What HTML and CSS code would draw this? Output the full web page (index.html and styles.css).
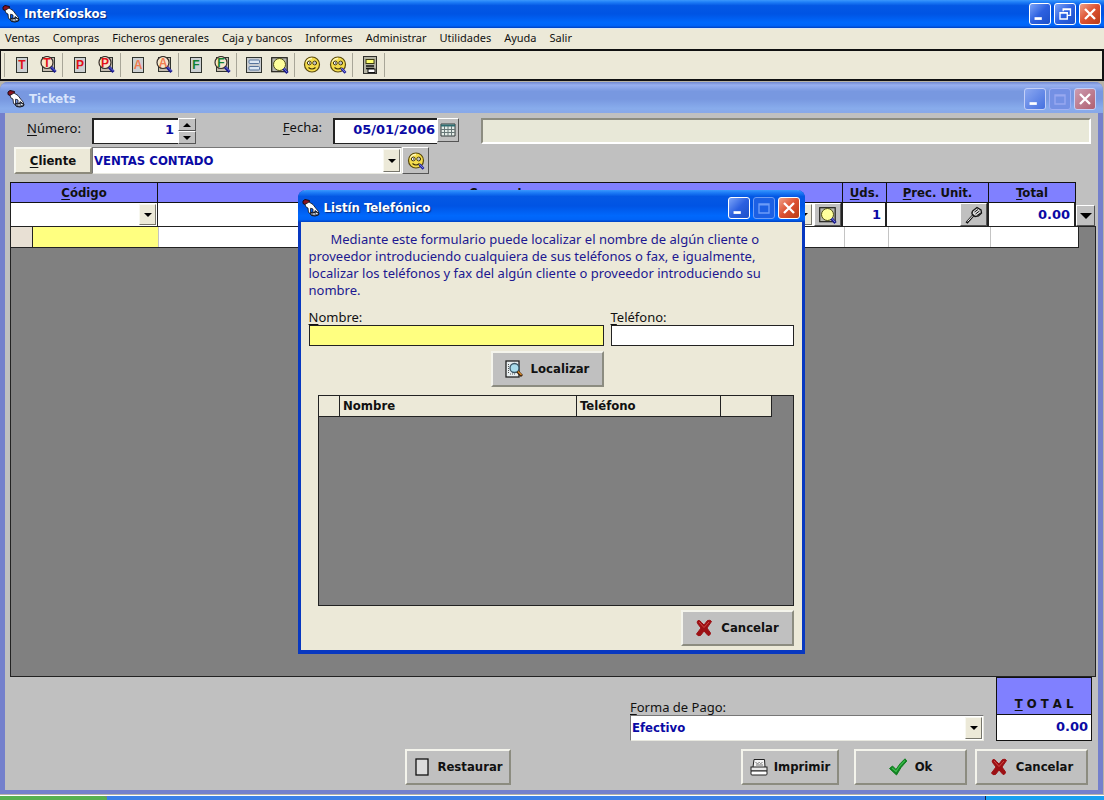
FILE: index.html
```html
<!DOCTYPE html>
<html lang="es">
<head>
<meta charset="utf-8">
<title>InterKioskos</title>
<meta name="viewport" content="width=device-width, initial-scale=1">
<link rel="stylesheet" href="styles.css">
</head>
<body>
<svg class="defs" aria-hidden="true">
  <symbol id="hand" viewBox="0 0 18 18">
    <path d="M1 2L3 .5L7.500 1.500L7 4L3 5.500L1 4.500z" fill="#8c1420" stroke="#1a0a18"/>
    <path d="M3 5.500L7 3L11 5.500L14 9.500L16.500 12.500L16 14L13 11.500L12.500 14L11 13L11 10L8.500 9L8.500 14.500L6.500 13.500L6 9L4 8z" fill="#fff" stroke="#101018" stroke-width=".8"/>
    <path d="M4 6.500L7 4.500L10.500 6.500L12.500 9.500L8.500 8L7.500 12.500L6.800 8z" fill="#fff"/>
    <path d="M8 14.500L10 13L12 14L14 12.500L17 14L16.500 16L13 17L9.500 16.500z" fill="#667080" stroke="#101018"/>
    <path d="M11 15h2M14 14.500h1.500" stroke="#e8eef4"/>
  </symbol>
  <symbol id="page" viewBox="0 0 18 18">
    <rect x="3.500" y="1.500" width="11" height="15" fill="#ccd0d2" stroke="#30342e"/>
  </symbol>
  <symbol id="lens" viewBox="0 0 18 18">
    <rect x="3.500" y="1.500" width="12" height="14" fill="#c4bcb0" stroke="#30342e"/>
    <circle cx="8" cy="6.500" r="6" fill="#f6e6cc" stroke="#38302c" stroke-width="1.200"/>
    <path d="M12 11L16.500 16" stroke="#1a1a8c" stroke-width="3"/>
    <path d="M12.500 11L16.500 15" stroke="#6c74e0" stroke-width="1"/>
  </symbol>
  <symbol id="face" viewBox="0 0 18 18">
    <circle cx="9" cy="8.500" r="7.500" fill="#f4dc4c" stroke="#5a4a0c" stroke-width="1.200"/>
    <path d="M3.500 6A6 6 0 0 1 9 2.500" stroke="#fff8b8" stroke-width="1.500" fill="none"/>
    <circle cx="6.300" cy="7" r="1.900" fill="#fff" stroke="#3a3008"/><circle cx="11.700" cy="7" r="1.900" fill="#fff" stroke="#3a3008"/>
    <path d="M6 7h1M11.500 7h1" stroke="#000"/>
    <path d="M5.500 11.500Q9 14.500 12.500 11.500" fill="none" stroke="#3a3008" stroke-width="1.200"/>
  </symbol>
  <symbol id="facelens" viewBox="0 0 18 18">
    <use href="#face"/>
    <path d="M12.500 12.500L16.500 16.800" stroke="#24249c" stroke-width="2.600"/>
    <path d="M12.500 12.300L16 16" stroke="#7a84e8"/>
  </symbol>
  <symbol id="find" viewBox="0 0 18 18">
    <rect x=".7" y="1.700" width="15.500" height="14" fill="#b8b8b0" stroke="#20201c" stroke-width="1.200"/>
    <circle cx="8.500" cy="8.500" r="6" fill="#ffff9c" stroke="#4c4c14"/>
    <path d="M12.500 12.500L16.500 17" stroke="#1c1c8c" stroke-width="3"/>
    <path d="M12.500 12L16 16" stroke="#7a84e8"/>
  </symbol>
  <symbol id="cross" viewBox="0 0 18 18">
    <path d="M3 1.500Q5 1 6.500 3.500L9 6L12.500 1.500Q15.500 .5 16.500 2.500L12 9L15.500 14Q15.500 16.500 13 16.500L9 12L5.500 16.500Q2.500 17.500 1.500 15L6 9L2.500 4.500Q1.500 3 3 1.500z" fill="#9c1014" stroke="#9c1014"/>
    <path d="M4 3L9 8.500L14 3" stroke="#d04844" fill="none"/>
  </symbol>
  <symbol id="min" viewBox="0 0 22 22"><path d="M5 16h8" stroke="#fff" stroke-width="3"/></symbol>
  <symbol id="max" viewBox="0 0 22 22"><path d="M5.500 6.500h11v10h-11zM5.500 7.500h11" fill="none" stroke="currentColor" stroke-width="1.500"/></symbol>
  <symbol id="close" viewBox="0 0 22 22"><path d="M5.500 5.500l11 11M16.500 5.500L5.500 16.500" stroke="#fff" stroke-width="2.600"/></symbol>
  <symbol id="down" viewBox="0 0 8 4"><path d="M0 0h8L4 4z"/></symbol>
</svg>

<header class="titlebar">
  <svg class="ico"><use href="#hand"/></svg>
  <h1>InterKioskos</h1>
  <div class="wbtns">
    <button class="wbtn" aria-label="Minimizar"><svg><use href="#min"/></svg></button>
    <button class="wbtn" aria-label="Restaurar ventana"><svg viewBox="0 0 22 22"><path d="M9 8V5.500h8v7h-3M5.500 9.500h8v7h-8zM9 6h8M5.500 10h8" fill="none" stroke="#fff" stroke-width="1.500"/></svg></button>
    <button class="wbtn red" aria-label="Cerrar"><svg><use href="#close"/></svg></button>
  </div>
</header>
<nav class="menu">
  <a href="#">Ventas</a><a href="#">Compras</a><a href="#">Ficheros generales</a><a href="#">Caja y bancos</a><a href="#">Informes</a><a href="#">Administrar</a><a href="#">Utilidades</a><a href="#">Ayuda</a><a href="#">Salir</a>
</nav>
<div class="toolbar" role="toolbar" aria-label="Herramientas">
  <div class="tools">
    <button aria-label="Ticket"><svg viewBox="0 0 18 18"><use href="#page"/><text x="9" y="13" class="ltr red-l">T</text></svg></button>
    <button aria-label="Buscar ticket"><svg viewBox="0 0 18 18"><use href="#lens"/><text x="8" y="11" class="ltr red-l">T</text></svg></button>
  </div>
  <div class="tools">
    <button aria-label="Pedido"><svg viewBox="0 0 18 18"><use href="#page"/><text x="9" y="13" class="ltr red-l">P</text></svg></button>
    <button aria-label="Buscar pedido"><svg viewBox="0 0 18 18"><use href="#lens"/><text x="8" y="11" class="ltr red-l">P</text></svg></button>
  </div>
  <div class="tools">
    <button aria-label="Albarán"><svg viewBox="0 0 18 18"><use href="#page"/><text x="9" y="13" class="ltr org-l">A</text></svg></button>
    <button aria-label="Buscar albarán"><svg viewBox="0 0 18 18"><use href="#lens"/><text x="8" y="11" class="ltr org-l">A</text></svg></button>
  </div>
  <div class="tools">
    <button aria-label="Factura"><svg viewBox="0 0 18 18"><use href="#page"/><text x="9" y="13" class="ltr grn-l">F</text></svg></button>
    <button aria-label="Buscar factura"><svg viewBox="0 0 18 18"><use href="#lens"/><text x="8" y="11" class="ltr grn-l">F</text></svg></button>
  </div>
  <div class="tools">
    <button aria-label="Artículos"><svg viewBox="0 0 18 18"><rect x="1.500" y="1.500" width="15" height="15" fill="#c8ccd0" stroke="#30342e"/><rect x="4" y="4" width="10.500" height="3.500" rx="1" fill="#dce8f4" stroke="#56749c"/><rect x="4" y="10.500" width="10.500" height="3.500" rx="1" fill="#dce8f4" stroke="#56749c"/></svg></button>
    <button aria-label="Buscar artículo"><svg><use href="#find"/></svg></button>
  </div>
  <div class="tools">
    <button aria-label="Clientes"><svg><use href="#face"/></svg></button>
    <button aria-label="Buscar cliente"><svg><use href="#facelens"/></svg></button>
  </div>
  <div class="tools">
    <button aria-label="Caja"><svg viewBox="0 0 18 18"><rect x="2.500" y=".5" width="13" height="17" fill="#b4b4a4" stroke="#30302c"/><rect x="5" y="3.500" width="8" height="4" fill="#ffff70" stroke="#3c3c10"/><path d="M5 10h8M5 12.500h8" stroke="#111" stroke-width="1.500"/><rect x="7" y="13" width="7" height="3.500" fill="#fff" stroke="#111"/></svg></button>
  </div>
  <div class="tools"></div>
</div>

<main class="desk">
  <section class="window tickets" aria-label="Tickets">
    <header class="titlebar faded">
      <svg class="ico"><use href="#hand"/></svg>
      <h2>Tickets</h2>
      <div class="wbtns">
        <button class="wbtn" aria-label="Minimizar Tickets"><svg><use href="#min"/></svg></button>
        <button class="wbtn off" aria-label="Maximizar Tickets" disabled><svg><use href="#max"/></svg></button>
        <button class="wbtn red" aria-label="Cerrar Tickets"><svg><use href="#close"/></svg></button>
      </div>
    </header>
    <form class="form">
      <div class="row">
        <label class="lab-num" for="num"><u>N</u>úmero:</label>
        <div class="spin">
          <input id="num" class="box num" value="1">
          <div class="spinner">
            <button type="button" aria-label="Subir"><svg class="tri flip"><use href="#down"/></svg></button>
            <button type="button" aria-label="Bajar"><svg class="tri"><use href="#down"/></svg></button>
          </div>
        </div>
        <label class="lab-date" for="fecha"><u>F</u>echa:</label>
        <div class="date">
          <input id="fecha" class="box num" value="05/01/2006">
          <button type="button" class="raised" aria-label="Calendario"><svg class="cal" viewBox="0 0 16 14"><path d="M1 1h14v12H1z" fill="#e4ece8" stroke="#343c3c"/><path d="M1 2.500h14" stroke="#2c6c70" stroke-width="2"/><path d="M1 6.500h14M1 9.500h14M4.500 3v10M8 3v10M11.500 3v10" stroke="#687878"/></svg></button>
        </div>
        <output class="panel"></output>
      </div>
      <div class="row second">
        <button type="button" class="cream"><span><u>C</u>liente</span></button>
        <div class="combo client"><select aria-label="Cliente"><option>VENTAS CONTADO</option></select><span class="arrow"><svg class="tri"><use href="#down"/></svg></span></div>
        <button type="button" class="raised sq" aria-label="Buscar cliente"><svg class="ico"><use href="#facelens"/></svg></button>
      </div>

      <div class="entry">
        <label class="hd" for="cod"><span><u>C</u>ódigo</span></label>
        <label class="hd" for="con"><span><u>C</u>oncepto</span></label>
        <label class="hd" for="uds"><span><u>U</u>ds.</span></label>
        <label class="hd" for="pre"><span><u>P</u>rec. Unit.</span></label>
        <label class="hd" for="tot"><span><u>T</u>otal</span></label>
        <i></i>
        <div class="combo cell"><select id="cod"><option></option></select><span class="arrow"><svg class="tri"><use href="#down"/></svg></span></div>
        <div class="cell split"><div class="combo"><select id="con"><option></option></select><span class="arrow"><svg class="tri"><use href="#down"/></svg></span></div><button type="button" class="raised sq" aria-label="Buscar artículo"><svg class="ico"><use href="#find"/></svg></button></div>
        <div class="cell"><input id="uds" class="num" value="1"></div>
        <div class="cell split"><input id="pre" class="num"><button type="button" class="raised sq" aria-label="Cambiar precio"><svg class="ico" viewBox="0 0 18 18"><path d="M1.500 17L9 8.500" stroke="#111" stroke-width="2.600"/><path d="M2.500 15.500L8 9.500" stroke="#fff"/><path d="M7 8Q6.500 5 9.500 3.500L12 1.500L16 4L16.500 7L13.500 10L10 10.500z" fill="#ddd" stroke="#111" stroke-width="1.300"/><path d="M9.500 6L13 3.500M10.500 8L14.500 5M12 9.500L15.500 7" stroke="#111"/></svg></button></div>
        <div class="cell"><input id="tot" class="num" value="0.00"></div>
        <button type="button" class="raised add" aria-label="Añadir línea"><svg viewBox="0 0 12 6"><path d="M0 0h12L6 6z"/></svg></button>
      </div>

      <div class="lines">
        <table aria-label="Líneas del ticket">
          <colgroup><col class="c-sel"><col class="c-cod"><col><col class="c-uds"><col class="c-pre"><col class="c-tot"></colgroup>
          <tbody><tr><td class="sel"></td><td class="yellow"></td><td></td><td></td><td></td><td></td></tr></tbody>
        </table>
      </div>

      <div class="pay">
        <div class="pay-field">
          <label for="pago"><u>F</u>orma de Pago:</label>
          <div class="combo"><select id="pago"><option>Efectivo</option></select><span class="arrow"><svg class="tri"><use href="#down"/></svg></span></div>
        </div>
        <div class="total"><label for="total"><span><u>T</u> O T A L</span></label><input id="total" class="num" value="0.00"></div>
      </div>
      <div class="actions">
        <button type="button" class="btn rest"><svg class="ico" viewBox="0 0 18 18"><rect x="3" y="1" width="12" height="16" fill="#dcdcdc" stroke="#111" stroke-width="1.300"/></svg>Restaurar</button>
        <button type="button" class="btn print"><svg class="ico" viewBox="0 0 18 18"><path d="M3 9L4 1.500h10.500L15 9" fill="#f4f4f4" stroke="#222"/><path d="M5.500 4.500l2 1 2-1 1 1 2-1M6 7h7" stroke="#777" fill="none"/><rect x="1" y="9" width="16" height="4" fill="#e8e8e8" stroke="#222"/><rect x="1" y="13" width="16" height="4" rx="1" fill="#fff" stroke="#222"/></svg>Imprimir</button>
        <button type="button" class="btn wide"><svg class="ico" viewBox="0 0 18 18"><path d="M.5 10.500L3.500 8L7 11.500Q11 5 16 .8L17.800 3Q11.500 9 7.500 17z" fill="#108020" stroke="#108020"/><path d="M3 10L7 13.500Q11 7 16 2.500" stroke="#3cbc4c" stroke-width="1.300" fill="none"/></svg><span>Ok</span></button>
        <button type="button" class="btn wide canc"><svg class="ico"><use href="#cross"/></svg>Cancelar</button>
      </div>
    </form>
  </section>

  <section class="window dialog" role="dialog" aria-label="Listín Telefónico">
    <header class="titlebar">
      <svg class="ico"><use href="#hand"/></svg>
      <h2>Listín Telefónico</h2>
      <div class="wbtns">
        <button class="wbtn" aria-label="Minimizar listín"><svg><use href="#min"/></svg></button>
        <button class="wbtn off" aria-label="Maximizar listín" disabled><svg><use href="#max"/></svg></button>
        <button class="wbtn red" aria-label="Cerrar listín"><svg><use href="#close"/></svg></button>
      </div>
    </header>
    <form class="dlg">
      <p>Mediante este formulario puede localizar el nombre de algún cliente o<br>proveedor introduciendo cualquiera de sus teléfonos o fax, e igualmente,<br>localizar los teléfonos y fax del algún cliente o proveedor introduciendo su<br>nombre.</p>
      <div class="search">
        <div class="f-name"><label for="nom"><u>N</u>ombre:</label><input id="nom" class="plain yellow"></div>
        <div class="f-tel"><label for="tel"><u>T</u>eléfono:</label><input id="tel" class="plain"></div>
      </div>
      <button type="button" class="btn wide loc"><svg class="ico" viewBox="0 0 18 18"><rect x="1" y="1" width="13" height="16" fill="#e8eef0" stroke="#222" stroke-width="1.300"/><path d="M3.500 4v10M5 14h5" stroke="#555" stroke-dasharray="1 1"/><circle cx="9.500" cy="8" r="4.500" fill="#a8dcec" stroke="#3c5868" stroke-width="1.300"/><path d="M12.500 11.500L17 16" stroke="#3c2008" stroke-width="3"/><path d="M13 11.500L16.500 15" stroke="#e09030" stroke-width="1.200"/></svg>Localizar</button>
      <div class="results">
        <table>
          <thead><tr><th class="r-sel"></th><th class="r-nom">Nombre</th><th class="r-tel">Teléfono</th><th class="r-x"></th></tr></thead>
        </table>
      </div>
      <button type="button" class="btn wide dcanc"><svg class="ico"><use href="#cross"/></svg>Cancelar</button>
    </form>
  </section>
</main>
<footer class="taskbar"><span class="start"></span><span class="tasks"></span><span class="tray"></span></footer>
</body>
</html>
```
FILE: styles.css
```css
:root {
  --ui: "Noto Sans", "DejaVu Sans Condensed", sans-serif;
  --bold: "DejaVu Sans Condensed", "Noto Sans", sans-serif;
  --cream: #ece9d8;
  --gray: #c0c0c0;
  --violet: #8080ff;
  --navy: #0a0aa4;
}
* { box-sizing: border-box; }
body {
  margin: 0;
  min-height: 100vh;
  display: flex;
  flex-direction: column;
  font: 13px/16px var(--ui);
  color: #111;
  background: #808080;
}
button, input, select { font: inherit; color: inherit; margin: 0; border-radius: 0; }
button { padding: 0; border: 0; background: none; }
svg { display: block; }
u { text-underline-offset: 2px; }
.defs { position: absolute; width: 0; height: 0; }
.ico { width: 18px; height: 18px; flex: none; }
.tri { width: 8px; height: 4px; }
.flip { transform: rotate(180deg); }

.titlebar {
  display: flex;
  align-items: center;
  height: 28px;
  padding: 0 3px 0 2px;
  gap: 4px;
  color: #fff;
  background: linear-gradient(#3c98fc 0, #2080f8 7%, #0458e4 20%, #0054e4 50%, #0068fc 80%, #0064f8 92%, #0040c0 100%);
}
.titlebar h1, .titlebar h2 { margin: 0; font: bold 13px/16px var(--bold); text-shadow: 1px 1px 1px #0a2a80; }
.wbtns { display: flex; gap: 3px; margin-left: auto; }
.wbtn {
  width: 22px;
  height: 22px;
  border: 1px solid #fff;
  border-radius: 3px;
  background: linear-gradient(135deg, #7ca4f8, #2c60e0 50%, #1c50c8);
}
.wbtn svg { width: 20px; height: 20px; }
.wbtn.red { background: linear-gradient(135deg, #f0a088, #dc5030 50%, #b83c18); }
.wbtn.off { color: #6c9cf8; border-color: #6c9cf4; background: #1c60e4; }

.menu {
  display: flex;
  gap: 13px;
  height: 21px;
  padding: 1px 5px 0;
  font-size: 11px;
  background: var(--cream);
  border-top: 1px solid #dce8f4;
}
.menu a { color: #111; text-decoration: none; }
.toolbar {
  display: flex;
  height: 32px;
  padding: 2px 3px;
  background: var(--cream);
  border: 1px solid #111;
  border-width: 2px 2px 2px 1px;
}
.tools {
  display: flex;
  align-items: center;
  gap: 8px;
  padding: 0 5px 0 8px;
  border-left: 1px solid #a8a698;
}
.tools svg { width: 18px; height: 18px; }
.ltr { font: bold 12px "Liberation Sans", sans-serif; text-anchor: middle; }
.red-l { fill: #e01018; }
.org-l { fill: #f07c50; }
.grn-l { fill: #108030; }

.desk { position: relative; flex: 1; display: flex; padding: 1px 1px 1px 0; background: #b8b4a8; }
.window { display: flex; flex-direction: column; border-radius: 8px 8px 0 0; }
.tickets { flex: 1; min-width: 0; background: var(--gray); border: solid #7480cc; border-width: 0 5px 4px; }
.faded {
  height: 31px;
  margin: 0 -5px;
  padding: 2px 7px 0 7px;
  border-radius: 8px 8px 0 0;
  background: linear-gradient(#7088d0 0, #98b0f0 10%, #7898e0 30%, #7898e0 55%, #88acec 85%, #88a8e8);
}
.titlebar.faded h2 { color: #d8e4fc; text-shadow: none; }
.faded .wbtn { border-color: #c4d0f8; background: linear-gradient(135deg, #8ca8f0, #4470e0); }
.faded .wbtn.red { background: linear-gradient(135deg, #cc9cb0, #b06070); }
.faded .wbtn.off { color: #98a8f0; border-color: #a0b0f4; background: #7490e4; }

.form { flex: 1; display: flex; flex-direction: column; padding: 5px 2px 5px 5px; }
.row { display: flex; padding-right: 5px; }
.second { margin: 3px 0 8px; padding-left: 4px; align-items: stretch; height: 27px; }
.box { background: #fff; border: 2px solid #222; border-width: 2px 1px 1px 2px; }
input, select { font: bold 13px/16px var(--bold); color: var(--navy); padding: 0 4px; min-width: 0; outline: 0; }
.num { text-align: right; font-family: "DejaVu Sans", sans-serif; }
.lab-num { width: 82px; padding: 2px 0 0 17px; }
.spin { display: flex; width: 104px; height: 26px; }
.spin input { flex: 1; width: 0; padding-bottom: 4px; border-right: 0; }
.spinner { display: grid; width: 18px; }
.spinner button, .raised {
  display: flex;
  align-items: center;
  justify-content: center;
  background: var(--gray);
  border: 1px solid #fff;
  border-right-color: #555;
  border-bottom-color: #555;
}
.lab-date { width: 137px; padding: 1px 11px 0 0; text-align: right; }
.date { display: flex; width: 126px; height: 26px; }
.date input { flex: 1; width: 0; padding: 0 2px 4px 0; border-right: 0; }
.date .raised { width: 22px; height: 24px; }
.cal { width: 16px; height: 14px; }
.panel { flex: 1; height: 26px; margin-left: 22px; background: #e8e8d8; border: 2px solid #fff; border-top-color: #8c8c80; border-left-color: #8c8c80; }
.cream { width: 78px; font: bold 13px/16px var(--bold); background: var(--cream); border: 2px solid #f8f8f0; border-right-color: #8c8a7c; border-bottom-color: #8c8a7c; }
.combo { position: relative; display: flex; background: #fff; }
.combo select { flex: 1; width: 0; padding: 0 20px 0 1px; border: 0; background: transparent; appearance: none; }
.arrow {
  position: absolute;
  top: 1px;
  right: 1px;
  bottom: 1px;
  width: 17px;
  display: flex;
  align-items: center;
  justify-content: center;
  pointer-events: none;
  background: var(--cream);
  border: 1px solid #f8f8f0;
  border-right-color: #77766c;
  border-bottom-color: #77766c;
}
.client { width: 310px; border: 1px solid #e8e8e0; border-top-color: #777; border-left-color: #777; }
.sq { width: 27px; flex: none; }

.entry { display: grid; grid-template-columns: 148px 1fr 44px 102px 87px 20px; grid-template-rows: 21px 23px; }
.hd {
  display: flex;
  align-items: center;
  justify-content: center;
  font: bold 13px/16px var(--bold);
  background: var(--violet);
  border: 1px solid #111;
  border-left-width: 0;
}
.hd:first-child { border-left-width: 1px; }
.cell { display: flex; min-width: 0; background: #fff; border-right: 2px solid #222; }
.cell.combo { border-left: 1px solid #222; border-right: 1px solid #222; }
.cell > input { flex: 1; width: 0; border: 0; background: #fff; }
.split .combo { flex: 1; }
.split .combo .arrow { right: 2px; }
.add { width: 19px; margin-top: 2px; }
.add svg { width: 12px; height: 6px; }

.lines { flex: 1; background: #808080; border: 1px solid #222; }
.lines table { width: calc(100% - 16px); table-layout: fixed; border-collapse: collapse; }
.lines td { height: 20px; padding: 0; background: #fff; border-right: 1px solid #c4c4c4; border-bottom: 1px solid #222; }
.lines td.sel { background: #e8e0d4; border-right-color: #222; }
.lines td:last-child { border-right-color: #222; }
.lines .yellow, .plain.yellow { background: #ffff80; }
.c-sel { width: 21px; }
.c-cod { width: 126px; }
.c-uds { width: 44px; }
.c-pre { width: 102px; }
.c-tot { width: 88px; }

.pay { display: flex; justify-content: flex-end; gap: 12px; padding-right: 4px; }
.pay-field { width: 354px; padding-top: 22px; }
.pay-field label { display: block; }
.pay-field .combo { height: 26px; border: 1px solid #e8e8e0; border-top-color: #777; border-left-color: #777; }
.total { display: flex; flex-direction: column; width: 96px; height: 64px; border: 1px solid #111; }
.total label { flex: 1; display: flex; align-items: flex-end; justify-content: center; padding-bottom: 2px; font: bold 13px/16px var(--bold); background: var(--violet); border-bottom: 1px solid #111; }
.total input { width: 100%; height: 25px; border: 0; background: #fff; padding: 0 3px 2px 0; }
.actions { display: flex; justify-content: flex-end; margin-top: 8px; padding-right: 8px; }
.btn {
  display: flex;
  align-items: center;
  justify-content: center;
  gap: 6px;
  height: 36px;
  font: bold 13px/16px var(--bold);
  background: var(--gray);
  border: 2px solid #f4f4ec;
  border-right-color: #8c8c80;
  border-bottom-color: #8c8c80;
}
.wide { width: 113px; gap: 8px; }
.rest { width: 106px; margin-right: auto; margin-left: 395px; }
.print { width: 98px; margin-right: 15px; }
.canc { margin-left: 8px; }

.dialog {
  position: absolute;
  top: 109px;
  left: 0;
  right: 2px;
  width: 507px;
  margin: 0 auto;
  background: var(--cream);
  border: solid #0838c0;
  border-width: 0 3px 4px;
}
.dialog > .titlebar { height: 32px; margin: 0 -3px; padding: 4px 5px 0 4px; border-radius: 8px 8px 0 0; }
.dlg { display: flex; flex-direction: column; padding: 9px 8px 4px; }
.dlg p { margin: 0; line-height: 17px; text-indent: 22px; color: #201890; }
.search { display: flex; gap: 7px; margin-top: 10px; }
.search label { display: block; }
.f-name { width: 295px; }
.f-tel { flex: 1; }
.plain { display: block; width: 100%; height: 21px; border: 1px solid #222; background: #fff; }
.loc { margin: 5px 0 8px 182px; }
.results { height: 211px; margin-left: 9px; background: #808080; border: 1px solid #222; }
.results table { border-collapse: collapse; table-layout: fixed; width: 453px; }
.results th { height: 20px; padding: 0 3px; text-align: left; font: bold 13px/16px var(--bold); background: var(--cream); border: solid #222; border-width: 0 1px 1px 0; }
.r-sel { width: 21px; }
.r-nom { width: 237px; }
.r-tel { width: 144px; }
.dcanc { align-self: flex-end; margin-top: 4px; }

.taskbar { display: flex; height: 5px; border-top: 1px solid #fff; }
.start { width: 107px; background: #58b050; border-radius: 0 4px 0 0; }
.tasks { flex: 1; background: #3c80e8; }
.tray { width: 119px; background: #18a0f0; border-left: 1px solid #124; }
```
